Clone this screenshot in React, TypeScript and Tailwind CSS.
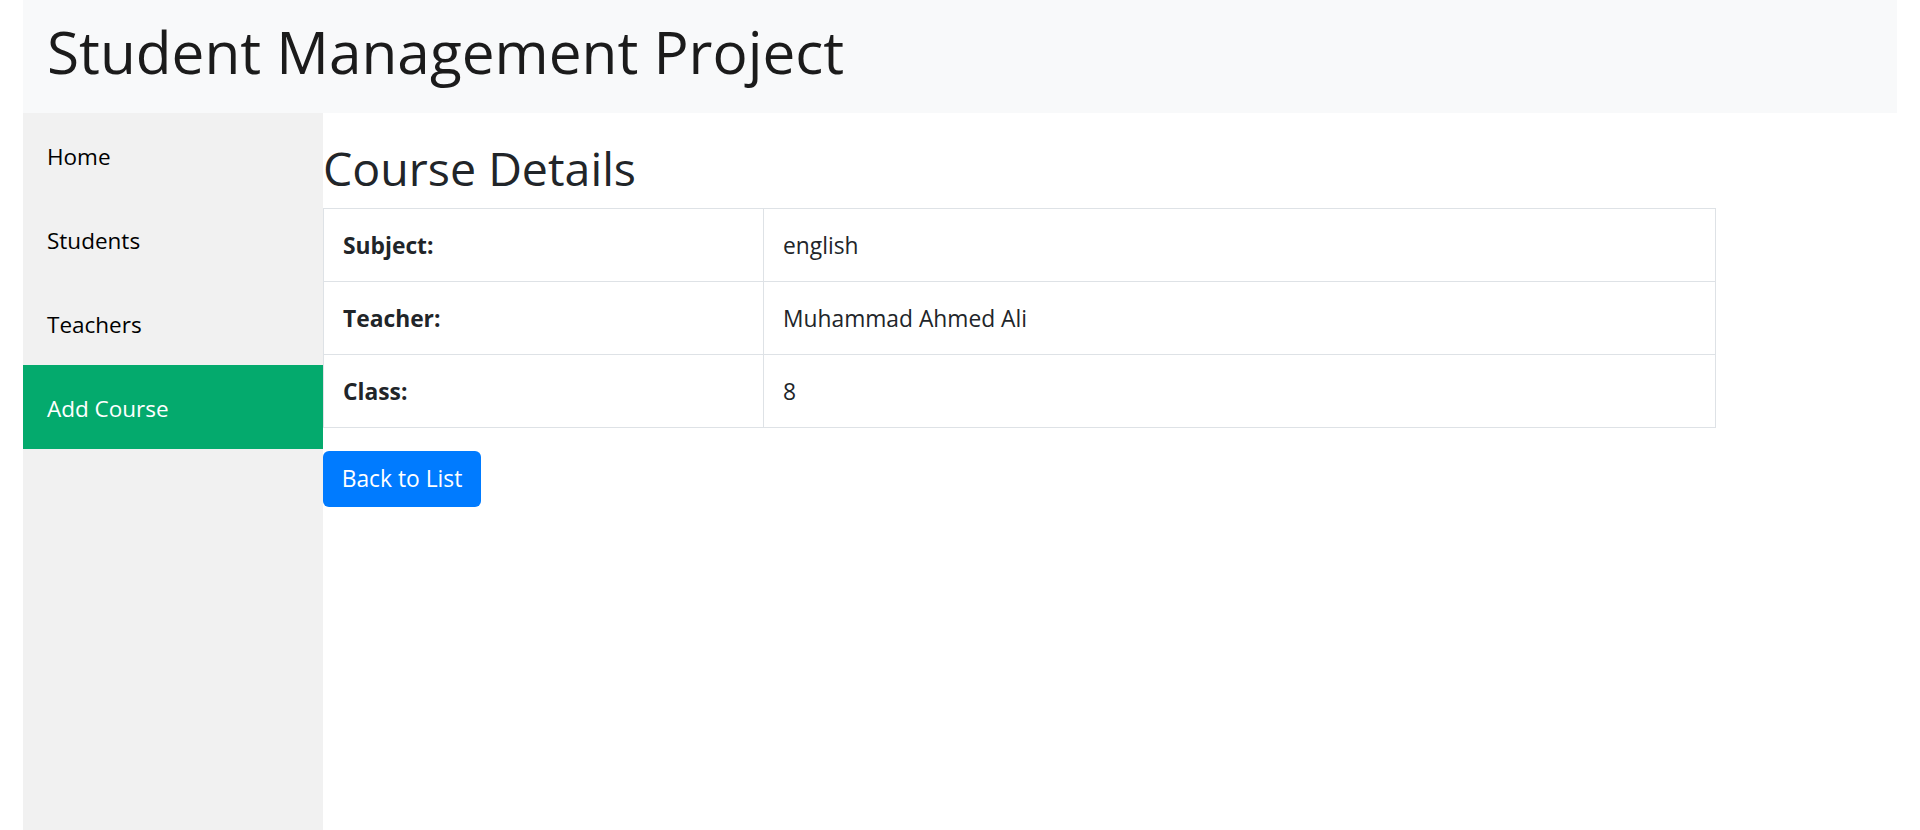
const navItems = [
  { label: "Home", active: false },
  { label: "Students", active: false },
  { label: "Teachers", active: false },
  { label: "Add Course", active: true },
];

const details = [
  { label: "Subject:", value: "english" },
  { label: "Teacher:", value: "Muhammad Ahmed Ali" },
  { label: "Class:", value: "8" },
];

export default function App() {
  return (
    <div className="h-[830px] overflow-hidden bg-white px-[23px] font-['Open_Sans',sans-serif]">
      <header className="flex h-[113px] items-center bg-[#f8f9fa] pb-[10px] pl-[24px]">
        <h1 className="text-[58.5px] leading-none font-normal text-[#1b1b1b]">Student Management Project</h1>
      </header>

      <div className="flex">
        <nav className="h-[717px] w-[300px] shrink-0 bg-[#f1f1f1]">
          {navItems.map((item) => (
            <a
              key={item.label}
              href="#"
              className={
                item.active
                  ? "flex h-[84px] items-center bg-[#04aa6d] px-[24px] pt-[3px] text-[22.5px] text-white"
                  : "flex h-[84px] items-center px-[24px] pt-[3px] text-[22.5px] text-black"
              }
            >
              {item.label}
            </a>
          ))}
        </nav>

        <main className="flex-1 pt-[28px]">
          <h2 className="mb-[13px] text-[46.5px] leading-[54px] font-normal text-[#212529]">Course Details</h2>

          <table className="w-[1393px] border-collapse border border-[#dee2e6] text-[22.8px] text-[#212529]">
            <tbody>
              {details.map((row) => (
                <tr key={row.label} className="h-[73px] border-t border-[#dee2e6]">
                  <th className="w-[440px] border-r border-[#dee2e6] px-[19px] pt-[2px] text-left font-bold">{row.label}</th>
                  <td className="px-[19px] pt-[2px]">{row.value}</td>
                </tr>
              ))}
            </tbody>
          </table>

          <button className="mt-[23px] flex h-[56px] w-[158px] items-center justify-center rounded-[6px] bg-[#007bff] text-[22.8px] text-white">
            Back to List
          </button>
        </main>
      </div>
    </div>
  );
}
